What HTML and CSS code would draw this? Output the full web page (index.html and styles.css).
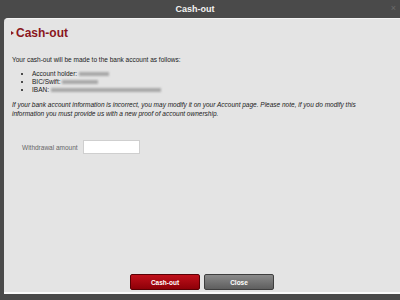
FILE: index.html
```html
<!DOCTYPE html>
<html lang="en-US">

<head>
    <meta charset="UTF-8">
    <meta name="viewport" content="width=device-width, initial-scale=1.0">
    <title>Cash-out</title>
    <link rel="stylesheet" href="styles.css">
</head>

<body>
    <div class="dialog">
        <div class="titlebar">
            <span class="title">Cash-out</span>
            <span class="close-x">&times;</span>
        </div>
        <div class="panel">
            <h1 class="heading"><span class="arrow"></span>Cash-out</h1>
            <p class="intro">Your cash-out will be made to the bank account as follows:</p>
            <ul class="details">
                <li>Account holder: <span class="blur w30"></span></li>
                <li>BIC/Swift: <span class="blur w36"></span></li>
                <li>IBAN: <span class="blur w110"></span></li>
            </ul>
            <p class="note">If your bank account information is incorrect, you may modify it on your Account page. Please note, if you do modify this information you must provide us with a new proof of account ownership.</p>
            <div class="field">
                <label for="amount">Withdrawal amount</label>
                <input type="text" id="amount">
            </div>
            <div class="buttons">
                <button class="btn btn-red">Cash-out</button>
                <button class="btn btn-grey">Close</button>
            </div>
        </div>
    </div>
</body>

</html>
```

FILE: styles.css
```css
body {
    margin: 0;
    padding: 0;
    background-color: #4a4a4a;
    font-family: "Liberation Sans", Arial, sans-serif;
}

.dialog {
    display: flex;
    flex-direction: column;
    height: 300px;
    width: 400px;
    overflow: hidden;
}

.titlebar {
    height: 18px;
    display: flex;
    align-items: center;
    justify-content: center;
    padding-right: 10px;
    position: relative;
}

.title {
    color: #f2f2f2;
    font-size: 9px;
    font-weight: bold;
}

.close-x {
    position: absolute;
    right: 4px;
    top: 3px;
    color: #6a6a6a;
    font-size: 9px;
}

.panel {
    flex: 1;
    margin: 0 0 6px 4px;
    padding: 6px 8px 2px 8px;
    background-color: #e4e4e4;
    border-top: 1px solid #f4f4f4;
    border-bottom: 2px solid #fafafa;
    border-top-left-radius: 4px;
    display: flex;
    flex-direction: column;
    color: #1a1a1a;
    font-size: 6.5px;
}

.heading {
    margin: 0;
    display: flex;
    align-items: center;
    color: #8a1620;
    font-size: 12px;
    font-weight: bold;
    height: 16px;
}

.arrow {
    width: 0;
    height: 0;
    border-top: 2.5px solid transparent;
    border-bottom: 2.5px solid transparent;
    border-left: 3px solid #8a1620;
    margin: 0 2px 0 -1px;
}

.intro {
    margin: 15px 0 0 0;
    line-height: 8px;
}

.details {
    margin: 6px 0 0 0;
    padding-left: 20px;
    line-height: 8px;
}

.blur {
    display: inline-block;
    height: 4px;
    background-color: #a8a8a8;
    filter: blur(1px);
    vertical-align: middle;
}

.w30 {
    width: 30px;
}

.w36 {
    width: 36px;
}

.w110 {
    width: 110px;
}

.note {
    margin: 6px 0 0 0;
    max-width: 356px;
    font-style: italic;
    line-height: 9px;
}

.field {
    display: flex;
    align-items: center;
    margin: 22px 0 0 10px;
    gap: 5px;
}

.field label {
    color: #666;
}

.field input {
    width: 53px;
    height: 10px;
    padding: 1px;
    border: 1px solid #cfcfcf;
    background-color: #fff;
}

.buttons {
    margin-top: auto;
    display: flex;
    justify-content: center;
    gap: 4px;
}

.btn {
    width: 70px;
    height: 16px;
    border-radius: 2px;
    color: #fff;
    font-family: "Liberation Sans", Arial, sans-serif;
    font-size: 6.5px;
    font-weight: bold;
    padding: 0;
}

.btn-red {
    background: linear-gradient(to bottom, #c0101a, #8e0008);
    border: 1px solid #5a0004;
}

.btn-grey {
    background: linear-gradient(to bottom, #8a8a8a, #5e5e5e);
    border: 1px solid #3e3e3e;
}
```
